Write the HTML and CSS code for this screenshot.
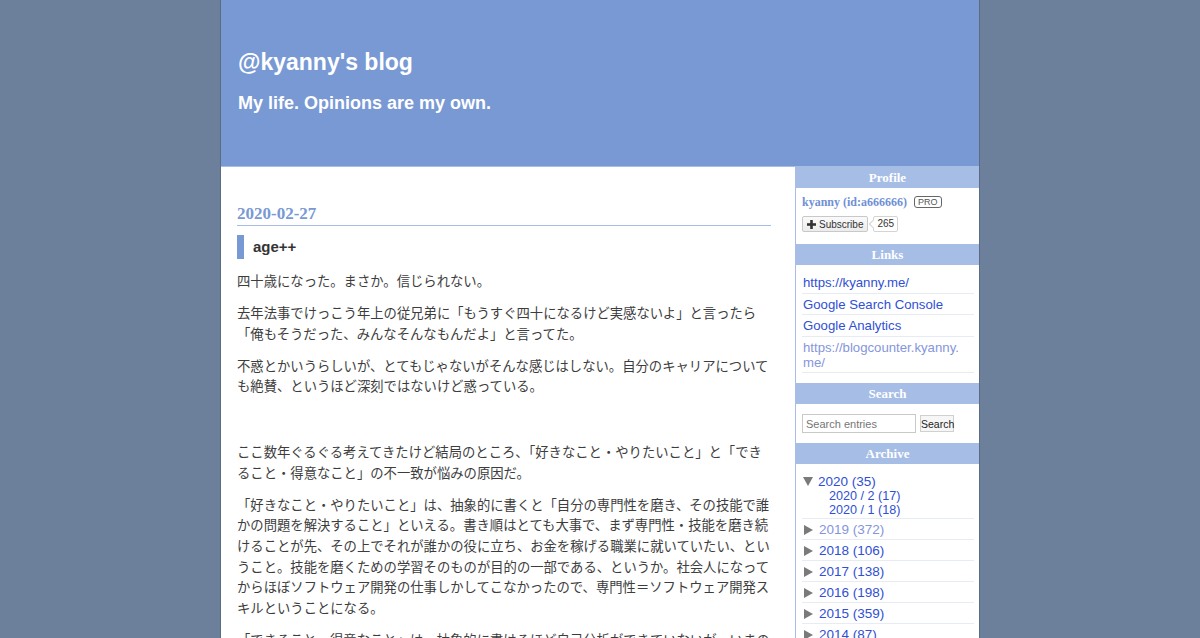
FILE: index.html
```html
<!DOCTYPE html>
<html lang="ja">
<head>
<meta charset="utf-8">
<title>@kyanny's blog</title>
<link rel="stylesheet" href="styles.css">
</head>
<body>
<div class="container">
  <header class="blog-header">
    <h1 class="blog-title">@kyanny's blog</h1>
    <p class="blog-desc">My life. Opinions are my own.</p>
  </header>
  <div class="content">
    <main class="main">
      <article class="entry">
        <div class="entry-date">2020-02-27</div>
        <h2 class="entry-title">age++</h2>
        <div class="entry-body">
          <p>四十歳になった。まさか。信じられない。</p>
          <p>去年法事でけっこう年上の従兄弟に「もうすぐ四十になるけど実感ないよ」と言ったら「俺もそうだった、みんなそんなもんだよ」と言ってた。</p>
          <p>不惑とかいうらしいが、とてもじゃないがそんな感じはしない。自分のキャリアについても絶賛、というほど深刻ではないけど惑っている。</p>
          <p class="blank"><br></p>
          <p>ここ数年ぐるぐる考えてきたけど結局のところ、「好きなこと・やりたいこと」と「できること・得意なこと」の不一致が悩みの原因だ。</p>
          <p>「好きなこと・やりたいこと」は、抽象的に書くと「自分の専門性を磨き、その技能で誰かの問題を解決すること」といえる。書き順はとても大事で、まず専門性・技能を磨き続けることが先、その上でそれが誰かの役に立ち、お金を稼げる職業に就いていたい、ということ。技能を磨くための学習そのものが目的の一部である、というか。社会人になってからほぼソフトウェア開発の仕事しかしてこなかったので、専門性＝ソフトウェア開発スキルということになる。</p>
          <p>「できること・得意なこと」は、抽象的に書けるほど自己分析ができていないが、いまの自分にできることを考えてみる。</p>
        </div>
      </article>
    </main>
    <aside class="sidebar">
      <section class="module">
        <div class="module-title">Profile</div>
        <div class="module-body profile">
          <div class="profile-name"><a class="profile-id">kyanny (id:a666666)</a><span class="pro">PRO</span></div>
          <div class="subscribe">
            <span class="sub-btn"><svg class="plus" width="9" height="9" viewBox="0 0 9 9"><rect x="3.2" y="0" width="2.6" height="9" fill="#333"/><rect x="0" y="3.2" width="9" height="2.6" fill="#333"/></svg>Subscribe</span><span class="sub-count">265</span>
          </div>
        </div>
      </section>
      <section class="module">
        <div class="module-title">Links</div>
        <div class="module-body links">
          <ul class="link-list">
            <li><a class="link">https://kyanny.me/</a></li>
            <li><a class="link">Google Search Console</a></li>
            <li><a class="link">Google Analytics</a></li>
            <li><a class="link visited">https://blogcounter.kyanny.<wbr>me/</a></li>
          </ul>
        </div>
      </section>
      <section class="module">
        <div class="module-title">Search</div>
        <div class="module-body search">
          <input class="search-input" type="text" placeholder="Search entries"><button class="search-btn">Search</button>
        </div>
      </section>
      <section class="module">
        <div class="module-title">Archive</div>
        <div class="module-body archive">
          <ul class="archive-list">
            <li>
              <span class="tri-down"></span><a class="link">2020 (35)</a>
              <ul class="archive-sub">
                <li><a class="link">2020 / 2 (17)</a></li>
                <li><a class="link">2020 / 1 (18)</a></li>
              </ul>
            </li>
            <li><span class="tri-right"></span><a class="link visited">2019 (372)</a></li>
            <li><span class="tri-right"></span><a class="link">2018 (106)</a></li>
            <li><span class="tri-right"></span><a class="link">2017 (138)</a></li>
            <li><span class="tri-right"></span><a class="link">2016 (198)</a></li>
            <li><span class="tri-right"></span><a class="link">2015 (359)</a></li>
            <li><span class="tri-right"></span><a class="link">2014 (87)</a></li>
            <li><span class="tri-right"></span><a class="link">2013 (52)</a></li>
          </ul>
        </div>
      </section>
    </aside>
  </div>
</div>
</body>
</html>
```
FILE: styles.css
```css
html, body {
  margin: 0;
  padding: 0;
}
body {
  background: #6c7f9b;
  font-family: "Liberation Sans", "Noto Sans CJK JP", sans-serif;
  color: #3d3d3d;
}
.container {
  width: 758px;
  margin: 0 auto;
  border-left: 1px solid #5b6b83;
  border-right: 1px solid #5b6b83;
  background: #fff;
}
.blog-header {
  height: 167px;
  background: #7899d4;
  border-bottom: 1px solid #a6bde6;
  box-sizing: border-box;
  padding: 47px 0 0 17px;
  color: #fff;
}
.blog-title {
  margin: 0;
  font-size: 23px;
  line-height: 30px;
  font-weight: bold;
}
.blog-desc {
  margin: 15px 0 0;
  font-size: 18px;
  line-height: 22px;
  font-weight: bold;
}
.content {
  display: flex;
  align-items: flex-start;
}
.main {
  width: 534px;
  padding: 37px 24px 0 16px;
  flex: none;
}
.entry-date {
  font-family: "Liberation Serif", serif;
  font-weight: bold;
  font-size: 17px;
  line-height: 20px;
  color: #7899d4;
  padding-bottom: 1px;
  border-bottom: 1px solid #a6bde6;
}
.entry-title {
  margin: 9px 0 0;
  border-left: 7px solid #7899d4;
  padding-left: 9px;
  font-size: 15px;
  line-height: 24px;
  font-weight: bold;
  color: #333;
}
.entry-body {
  margin-top: 12px;
  font-family: "Noto Sans CJK JP", "Liberation Sans", sans-serif;
  font-size: 13.33px;
  line-height: 20.6px;
  color: #3d3d3d;
}
.entry-body p {
  margin: 0 0 11.4px;
}
.entry-body p.blank {
  margin-bottom: 13.5px;
}
.sidebar {
  width: 183px;
  flex: none;
  border-left: 1px solid #a6bde6;
  min-height: 480px;
}
.module-title {
  height: 21px;
  line-height: 21px;
  background: #a6bde6;
  color: #fff;
  text-align: center;
  font-family: "Liberation Serif", serif;
  font-weight: bold;
  font-size: 13px;
}
.module-body {
  padding: 7px 5px 10px 6px;
}
.profile {
  padding: 6px 6px 12px;
}
.profile-name {
  display: flex;
  align-items: center;
  height: 16px;
}
.profile-id {
  font-family: "Liberation Serif", serif;
  font-weight: bold;
  font-size: 12px;
  color: #7090d6;
}
.pro {
  margin-left: 7px;
  border: 1px solid #666;
  border-radius: 3px;
  font-size: 9px;
  line-height: 10px;
  padding: 0 3px;
  color: #555;
}
.subscribe {
  margin-top: 6px;
  display: flex;
  align-items: center;
  height: 16px;
}
.sub-btn {
  display: flex;
  align-items: center;
  height: 14px;
  padding: 0 4px 0 4px;
  border: 1px solid #c8c8c8;
  border-radius: 2px;
  background: linear-gradient(#fafafa, #ececec);
  font-size: 10px;
  color: #333;
}
.plus {
  margin-right: 3px;
}
.sub-count {
  position: relative;
  margin-left: 5px;
  height: 14px;
  line-height: 14px;
  padding: 0 3px;
  border: 1px solid #d4d4d4;
  border-radius: 2px;
  background: #fff;
  font-size: 10px;
  color: #333;
}
.sub-count::before {
  content: "";
  position: absolute;
  left: -4px;
  top: 4px;
  width: 5px;
  height: 5px;
  background: #fff;
  border-left: 1px solid #d4d4d4;
  border-bottom: 1px solid #d4d4d4;
  transform: rotate(45deg);
}
.link-list, .archive-list, .archive-sub {
  list-style: none;
  margin: 0;
  padding: 0;
}
.link-list li {
  font-size: 13.2px;
  line-height: 15px;
  padding: 3px 0 2.5px 1px;
  border-bottom: 1px solid #e6ebf4;
}
.link {
  color: #2f4fd4;
  text-decoration: none;
}
.link.visited {
  color: #8595dc;
}
.search {
  display: flex;
  align-items: center;
  padding: 10px 6px 10px;
}
.search-input {
  width: 114px;
  height: 19px;
  box-sizing: border-box;
  margin: 0;
  border: 1px solid #c9c9c9;
  padding: 0 3px;
  font-family: "Liberation Sans", sans-serif;
  font-size: 11px;
  color: #333;
  background: #fff;
}
.search-input::placeholder {
  color: #767676;
}
.search-btn {
  margin: 0 0 0 4px;
  width: 34px;
  height: 17px;
  box-sizing: border-box;
  border: 1px solid #d0d0d0;
  background: #f6f6f6;
  padding: 0;
  font-family: "Liberation Sans", sans-serif;
  font-size: 10.5px;
  color: #222;
}
.archive-list > li {
  font-size: 13.5px;
  line-height: 15px;
  padding: 3px 0 2px 1px;
  border-bottom: 1px solid #e6ebf4;
}
.archive-sub {
  padding-left: 26px;
  margin-bottom: -1px;
}
.archive-sub li {
  font-size: 12.6px;
  line-height: 14px;
}
.tri-down {
  display: inline-block;
  width: 0;
  height: 0;
  border-left: 5px solid transparent;
  border-right: 5px solid transparent;
  border-top: 9px solid #7a7a7a;
  margin-right: 5px;
  vertical-align: 0;
}
.tri-right {
  display: inline-block;
  width: 0;
  height: 0;
  border-top: 5px solid transparent;
  border-bottom: 5px solid transparent;
  border-left: 9px solid #7a7a7a;
  margin: 0 6px 0 1px;
  vertical-align: -1px;
}
```
